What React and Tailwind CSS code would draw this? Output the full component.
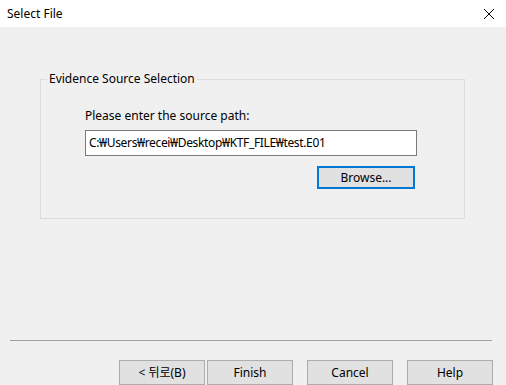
import React from "react";

const font = { fontFamily: '"Noto Sans", "Noto Sans CJK KR", sans-serif' };

function Btn({ children, className = "" }) {
  return (
    <button
      className={`h-[25px] w-[86px] border border-[#adadad] bg-[#e1e1e1] text-[12px] text-black leading-none ${className}`}
    >
      {children}
    </button>
  );
}

export default function App() {
  return (
    <div
      className="w-[506px] h-[385px] overflow-hidden bg-[#f0f0f0] flex flex-col text-[12px] text-black"
      style={font}
    >
      {/* title bar */}
      <div className="h-[27px] bg-white flex items-center justify-between pl-[7px] pr-[10px] shrink-0">
        <span className="text-[12px]">Select File</span>
        <svg width="12" height="12" viewBox="0 0 12 12" className="mr-[1px]">
          <path d="M1 1L11 11M11 1L1 11" stroke="#000" strokeWidth="1" />
        </svg>
      </div>

      {/* body */}
      <div className="flex-1 flex flex-col">
        {/* group box */}
        <div className="relative mt-[52px] ml-[40px] w-[425px] h-[140px] border border-[#dcdcdc]">
          <span className="absolute left-[6px] top-[-9px] bg-[#f0f0f0] px-[2px] leading-[16px]">
            Evidence Source Selection
          </span>
          <div className="pl-[44px] pt-[28px]">
            <div className="leading-[16px]">Please enter the source path:</div>
            <div className="mt-[6px] w-[332px] h-[26px] border border-[#7a7a7a] bg-white flex items-center pl-[3px] tracking-[-0.35px]">
              C:₩Users₩recei₩Desktop₩KTF_FILE₩test.E01
            </div>
            <div className="flex justify-end w-[330px] mt-[10px]">
              <button className="w-[98px] h-[23px] border-2 border-[#0078d7] bg-[#e1e1e1] text-[12px]">
                Browse...
              </button>
            </div>
          </div>
        </div>

        <div className="mt-[121px] ml-[10px] w-[482px] h-px bg-[#a0a0a0]" />

        <div className="mt-[19px] ml-[119px] flex">
          <Btn>&lt; 뒤로(B)</Btn>
          <Btn className="ml-[2px]">Finish</Btn>
          <Btn className="ml-[14px]">Cancel</Btn>
          <Btn className="ml-[14px]">Help</Btn>
        </div>
      </div>
    </div>
  );
}
